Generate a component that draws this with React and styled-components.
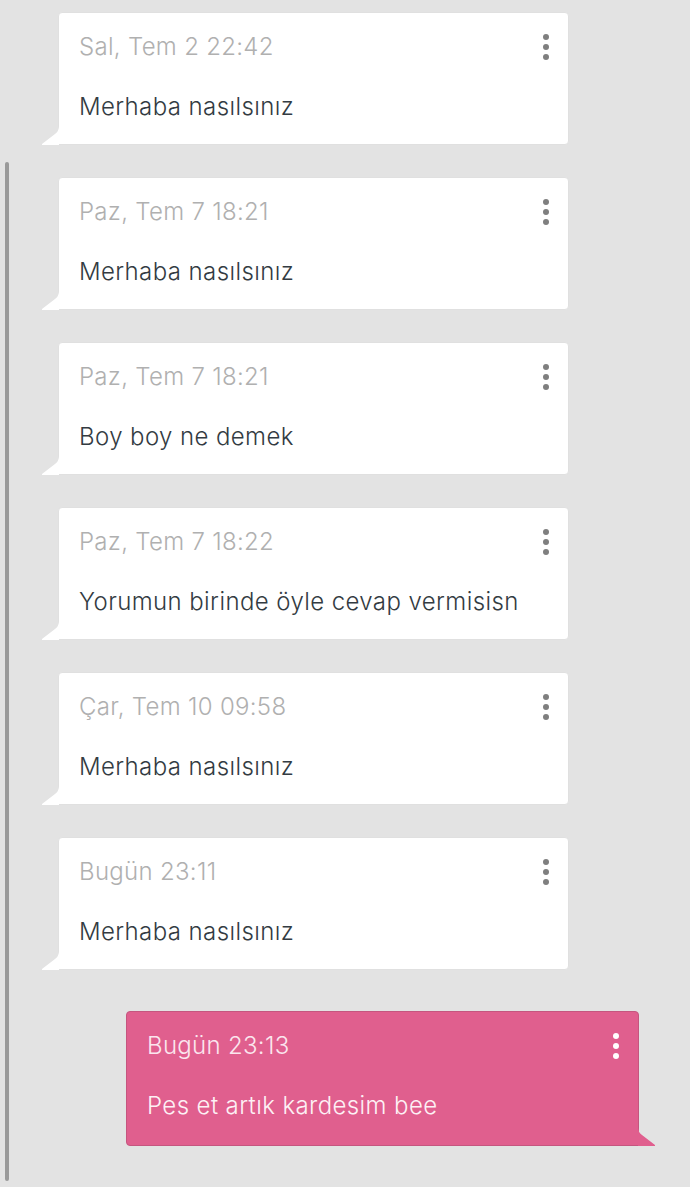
import styled, { createGlobalStyle } from "styled-components";

const Global = createGlobalStyle`
body {
    margin: 0;
    background: #e3e3e3;
    font-family: Inter, "Noto Sans", sans-serif;
}
`

const Thread = styled.div`
    display: flex;
    flex-direction: column;
    padding: 12px 0 40px;
    min-height: 1187px;
    box-sizing: border-box;
`

const Bubble = styled.div`
    position: relative;
    box-sizing: border-box;
    width: ${p => p.$mine ? 513 : 511}px;
    height: ${p => p.$mine ? 135 : 133}px;
    margin-left: ${p => p.$mine ? 126 : 58}px;
    margin-bottom: 32px;
    margin-top: ${p => p.$mine ? 9 : 0}px;
    padding: 20px 60px 25px 20px;
    border-radius: 4px;
    background: ${p => p.$mine ? '#e05f8e' : '#ffffff'};
    border: 1px solid ${p => p.$mine ? '#c5567f' : '#e0e0e0'};
    ${p => p.$mine ? 'border-bottom-right-radius: 0;' : 'border-bottom-left-radius: 0;'}

    /* little tail at the bottom corner */
    &::after {
        content: "";
        position: absolute;
        bottom: -1px;
        ${p => p.$mine ? 'right: -17px;' : 'left: -17px;'}
        width: 17px;
        height: 19px;
        background: ${p => p.$mine ? '#e05f8e' : '#ffffff'};
        clip-path: ${p => p.$mine
            ? 'path("M0 0 Q0 5 4 8 L17 18 L17 19 L0 19 Z")'
            : 'path("M17 0 Q17 5 13 8 L0 18 L0 19 L17 19 Z")'};
    }
`

const Stamp = styled.div`
    font-size: 24px;
    font-weight: 300;
    line-height: 28px;
    letter-spacing: 0.3px;
    color: ${p => p.$mine ? '#fbe6ee' : '#b0b0b0'};
`

const Text = styled.div`
    margin-top: 32px;
    font-size: 24px;
    font-weight: 300;
    line-height: 28px;
    letter-spacing: 0.4px;
    color: ${p => p.$mine ? '#fdf1f5' : '#333b42'};
    white-space: nowrap;
`

const Dots = styled.div`
    position: absolute;
    top: 21px;
    right: 19px;
    display: flex;
    flex-direction: column;
    gap: 4px;

    span {
        width: 6px;
        height: 6px;
        border-radius: 50%;
        background: ${p => p.$mine ? '#ffffff' : '#7f7f7f'};
    }
`

const ScrollBar = styled.div`
    position: fixed;
    left: 5px;
    top: 162px;
    width: 4px;
    height: 1019px;
    border-radius: 2px;
    background: #9a9a9a;
`

const messages = [
    { time: 'Sal, Tem 2 22:42', text: 'Merhaba nasılsınız' },
    { time: 'Paz, Tem 7 18:21', text: 'Merhaba nasılsınız' },
    { time: 'Paz, Tem 7 18:21', text: 'Boy boy ne demek' },
    { time: 'Paz, Tem 7 18:22', text: 'Yorumun birinde öyle cevap vermisisn' },
    { time: 'Çar, Tem 10 09:58', text: 'Merhaba nasılsınız' },
    { time: 'Bugün 23:11', text: 'Merhaba nasılsınız' },
    { time: 'Bugün 23:13', text: 'Pes et artık kardesim bee', mine: true },
]

const App = () => {
    return (
        <>
            <Global />
            <Thread>
                {messages.map((m, i) => (
                    <Bubble key={i} $mine={m.mine}>
                        <Stamp $mine={m.mine}>{m.time}</Stamp>
                        <Text $mine={m.mine}>{m.text}</Text>
                        <Dots $mine={m.mine}><span /><span /><span /></Dots>
                    </Bubble>
                ))}
            </Thread>
            <ScrollBar />
        </>
    );
}
export default App;
